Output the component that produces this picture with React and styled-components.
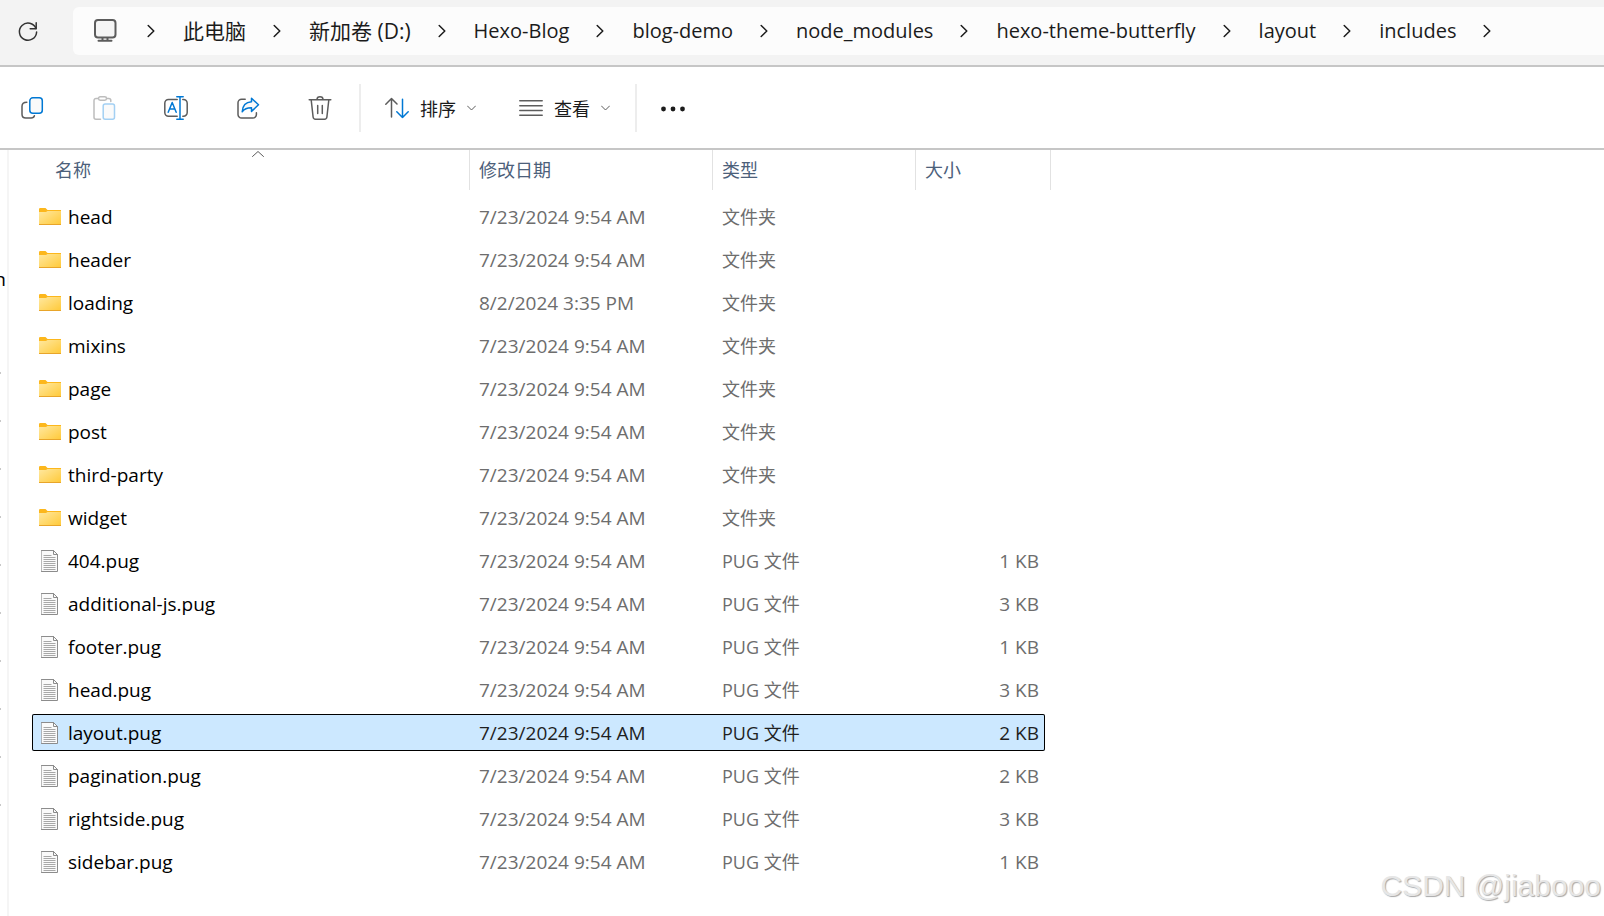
import styled, { createGlobalStyle } from "styled-components";

const GlobalStyle = createGlobalStyle`
  body {
    margin: 0;
    background-color: white;
    font-family: "Open Sans", "Noto Sans CJK SC", sans-serif;
  }
  * {
    box-sizing: border-box;
  }
`;

const Container = styled.div`
  position: relative;
  min-height: 100vh;
  display: flex;
  flex-direction: column;
  overflow: hidden;
`;
const Svg = styled.svg`
  display: block;
  flex: none;
  fill: none;
  stroke: ${(props) => props.$color || "#5c5c5c"};
  stroke-width: ${(props) => props.$weight || 1.5};
  stroke-linecap: round;
  stroke-linejoin: round;
`;

/* address bar */
const AddressBar = styled.header`
  display: flex;
  align-items: center;
  height: 67px;
  padding: 0 0 3px 16px;
  background-color: #f3f3f3;
  border-bottom: 2px solid #c6c6c6;
`;
const IconButton = styled.button`
  display: flex;
  align-items: center;
  justify-content: center;
  width: ${(props) => (props.$wide ? 48 : 24)}px;
  height: 48px;
  padding: 0;
  border: none;
  background: none;
  cursor: pointer;
`;
const Path = styled.nav`
  flex: 1;
  display: flex;
  align-items: center;
  height: 48px;
  margin-left: 33px;
  padding-left: 20px;
  border-radius: 6px 0 0 6px;
  background-color: #fcfcfc;
`;
const Crumbs = styled.ol`
  display: flex;
  margin: 0;
  padding: 0 0 0 30px;
  list-style: none;
`;
const Crumb = styled.li`
  display: flex;
  align-items: center;
  white-space: nowrap;
`;
const CrumbLink = styled.a`
  padding: 0 27px 0 28px;
  font-size: ${(props) => (props.$han ? 21 : 20)}px;
  line-height: 28px;
  color: #1b1b1b;
  text-decoration: none;
`;

/* toolbar */
const Toolbar = styled.div`
  display: flex;
  align-items: center;
  height: 83px;
  padding: 1px 0 0 8px;
  border-bottom: 2px solid #c6c6c6;
`;
const Tools = styled.div`
  display: flex;
  gap: 24px;
  margin-right: 15px;
`;
const Menus = styled.div`
  display: flex;
  gap: 43px;
  margin: 0 25px 0 24px;
`;
const Divider = styled.div`
  width: 2px;
  height: 48px;
  background-color: #ededed;
`;
const MenuButton = styled.button`
  display: flex;
  align-items: center;
  gap: 11px;
  height: 48px;
  padding: 0;
  border: none;
  background: none;
  font-family: inherit;
  font-size: 18px;
  color: #1b1b1b;
  cursor: pointer;
`;
const MoreButton = styled(IconButton)`
  margin-left: 24px;
`;

/* content */
const Main = styled.main`
  flex: 1;
  display: flex;
`;
const Sidebar = styled.aside`
  width: 9px;
  padding-top: 105px;
  border-right: 2px solid #f5f5f5;
  overflow: hidden;
`;
const SidebarItem = styled.div`
  display: flex;
  align-items: center;
  justify-content: flex-end;
  width: 6px;
  height: 48px;
  overflow: hidden;
  font-size: 19px;
  color: black;
`;
const Marks = styled.div`
  display: flex;
  flex-direction: column;
  gap: 46px;
  padding-top: 69px;
`;
const SidebarMark = styled.div`
  width: 1px;
  height: 2px;
  background-color: #c8c8c8;
`;
const Table = styled.table`
  display: block;
  margin-left: 23px;
`;
const Head = styled.thead`
  display: block;
  margin-bottom: 8px;
`;
const HeadRow = styled.tr`
  display: grid;
  grid-template-columns: 438px 243px 203px 135px;
`;
const HeadCell = styled.th`
  position: relative;
  height: 40px;
  padding: 0 0 0 ${(props) => (props.$first ? 23 : 9)}px;
  border-right: 1px solid #e2e2e2;
  font-size: 18px;
  font-weight: 400;
  line-height: 40px;
  text-align: left;
  color: #4c607a;
`;
const SortMark = styled(Svg)`
  position: absolute;
  top: 0;
  right: 205px;
`;
const Body = styled.tbody`
  display: flex;
  flex-direction: column;
  gap: 6px;
`;
const Row = styled.tr`
  display: grid;
  grid-template-columns: 437px 243px 203px 130px;
  align-items: center;
  width: 1013px;
  height: 37px;
  border-radius: 2px;
  color: ${(props) => (props.$selected ? "#1f1f1f" : "#6d6d6d")};
  background-color: ${(props) => (props.$selected ? "#cce8ff" : "transparent")};
  box-shadow: ${(props) => (props.$selected ? "inset 0 0 0 1px black" : "none")};
`;
const Cell = styled.td`
  padding: 0 6px 0 10px;
  font-size: ${(props) => (props.$han ? 18 : 19)}px;
  line-height: 26px;
  white-space: nowrap;
  text-align: ${(props) => props.$align || "left"};
`;
const NameCell = styled(Cell)`
  display: flex;
  align-items: center;
  gap: 7px;
  padding: 0 0 0 7px;
  color: black;
`;
const FileIconBox = styled.span`
  width: 22px;
  padding-left: ${(props) => (props.$file ? 2 : 0)}px;
`;
const Watermark = styled.div`
  position: absolute;
  right: 3px;
  bottom: 12px;
  font-family: "Liberation Sans", sans-serif;
  font-size: 30px;
  line-height: 36px;
  color: #e6e6e6;
  text-shadow: 1px 1px 1px #a8a8a8;
  pointer-events: none;
`;

const BLUE = "#0078d4";

const RefreshIcon = () => (
  <Svg width="24" height="24" $color="#333">
    <path d="M20 9.5A8.6 8.6 0 1 0 20.6 13" />
    <path d="M20.2 3.8v5.9h-6" />
  </Svg>
);
const MonitorIcon = () => (
  <Svg width="24" height="24" $weight={2}>
    <rect x="2" y="1" width="20.5" height="17.5" rx="3" fill="#f5f5f5" />
    <path d="M9.5 19v2.5M14.5 19v2.5M5.5 21.8h13" />
  </Svg>
);
const ChevronRight = () => (
  <Svg width="8" height="14" $color="#1b1b1b">
    <path d="M1.2 1.5L6.8 7l-5.6 5.5" />
  </Svg>
);
const ChevronDown = () => (
  <Svg width="9" height="6" $weight={1}>
    <path d="M.5 1l4 4 4-4" />
  </Svg>
);
const CopyIcon = () => (
  <Svg width="24" height="24">
    <path d="M6.8 6.3C3.8 6.3 2 7.6 2 10.3v7.9c0 2.5 1.4 3.8 3.8 3.8h5.4c1.7 0 2.8-.7 3.2-2.2" />
    <rect x="9.8" y="1.8" width="12.5" height="15.5" rx="3" stroke={BLUE} fill="#fafafa" />
  </Svg>
);
const PasteIcon = () => (
  <Svg width="24" height="24" $color="#bdbdbd">
    <path d="M6 2.5H4a2 2 0 0 0-2 2v16.7a2 2 0 0 0 2 2h4.5M15 2.5h1.8a2 2 0 0 1 2 2v1" />
    <rect x="6.5" y=".8" width="8" height="3.4" rx="1.7" />
    <rect x="11.2" y="8" width="11.3" height="15.2" rx="2" stroke="#a3d0f3" fill="#fafafa" />
  </Svg>
);
const RenameIcon = () => (
  <Svg width="24" height="24">
    <path d="M13.2 3.5H4.5A3.7 3.7 0 0 0 .8 7.2v9.3a3.7 3.7 0 0 0 3.7 3.7h8.7M18.8 3.5h.7a3.7 3.7 0 0 1 3.7 3.7v9.3a3.7 3.7 0 0 1-3.7 3.7h-.7" />
    <path d="M4.2 16.2l4-9.7 4 9.7M5.6 13h5.2M16 .8v22.4M12.8.8h6.4M12.8 23.2h6.4" stroke={BLUE} />
  </Svg>
);
const ShareIcon = () => (
  <Svg width="24" height="24">
    <path d="M9.2 3.2H5.6A3.6 3.6 0 0 0 2 6.8v11.6A3.6 3.6 0 0 0 5.6 22h11.2a3.6 3.6 0 0 0 3.6-3.6v-1.6" />
    <path d="M15.5 2.2l7 6.6-7 6.6v-3.6c-4.4-.1-7 .9-9.3 4 .3-5.6 3.6-9.6 9.3-10z" stroke={BLUE} fill="#fafafa" />
  </Svg>
);
const TrashIcon = () => (
  <Svg width="24" height="24">
    <path d="M1.2 3.8h21.6M9 3.5a3 2.7 0 0 1 6 0M3.2 4l1.9 17a2.5 2.5 0 0 0 2.4 2.2h9a2.5 2.5 0 0 0 2.4-2.2l1.9-17M9.7 9.5v8M14.3 9.5v8" />
  </Svg>
);
const SortIcon = () => (
  <Svg width="24" height="24">
    <path d="M6.5 21V2.5M.8 8.2l5.7-5.7L12 8" />
    <path d="M17.5 3.2v18.3M11.8 15.8l5.7 5.7 5.7-5.7" stroke={BLUE} />
  </Svg>
);
const ViewIcon = () => (
  <Svg width="24" height="24">
    <path d="M.8 4.8h22.4M.8 9.8h22.4M.8 14.5h22.4M.8 19.2h22.4" />
  </Svg>
);
const MoreIcon = () => (
  <Svg width="24" height="24" $color="none">
    <g fill="#1b1b1b">
      <circle cx="2.5" cy="13" r="2.4" />
      <circle cx="12" cy="13" r="2.4" />
      <circle cx="21.5" cy="13" r="2.4" />
    </g>
  </Svg>
);
const FolderIcon = () => (
  <Svg width="22" height="17" $color="none">
    <defs>
      <linearGradient id="folder" x1="0" y1="0" x2="1" y2="1">
        <stop offset="0" stopColor="#ffe8a0" />
        <stop offset="1" stopColor="#ffc937" />
      </linearGradient>
    </defs>
    <path d="M0 1.2Q0 0 1.2 0h5.3L8.5 2H22v3H0z" fill="#fcb71c" />
    <path d="M0 4h7l1.5-1H22v14H0z" fill="url(#folder)" />
    <path d="M0 16h22v1H0z" fill="#e8a52a" />
  </Svg>
);
const FileIcon = () => (
  <Svg width="17" height="22" $color="#8c8c8c" $weight={1}>
    <path d="M.5.5h12l4 4v17H.5z" fill="#fafafa" />
    <path d="M12.5.5v4h4" />
    <path
      d="M2.5 5.5h8M2.5 7.5h12M2.5 9.5h12M2.5 11.5h12M2.5 13.5h12M2.5 15.5h12M2.5 17.5h12M2.5 19.5h12"
      stroke="#a8a8a8"
      strokeLinecap="butt"
    />
  </Svg>
);

const crumbs = [
  { name: "此电脑", han: true },
  { name: "新加卷 (D:)", han: true },
  { name: "Hexo-Blog" },
  { name: "blog-demo" },
  { name: "node_modules" },
  { name: "hexo-theme-butterfly" },
  { name: "layout" },
  { name: "includes" },
];

const tools = [
  { label: "复制", icon: <CopyIcon /> },
  { label: "粘贴", icon: <PasteIcon /> },
  { label: "重命名", icon: <RenameIcon /> },
  { label: "共享", icon: <ShareIcon /> },
  { label: "删除", icon: <TrashIcon /> },
];

const files = [
  { name: "head" },
  { name: "header" },
  { name: "loading", date: "8/2/2024 3:35 PM" },
  { name: "mixins" },
  { name: "page" },
  { name: "post" },
  { name: "third-party" },
  { name: "widget" },
  { name: "404.pug", size: "1 KB" },
  { name: "additional-js.pug", size: "3 KB" },
  { name: "footer.pug", size: "1 KB" },
  { name: "head.pug", size: "3 KB" },
  { name: "layout.pug", size: "2 KB", selected: true },
  { name: "pagination.pug", size: "2 KB" },
  { name: "rightside.pug", size: "3 KB" },
  { name: "sidebar.pug", size: "1 KB" },
];

const App = () => {
  return (
    <Container>
      <GlobalStyle />
      <AddressBar>
        <IconButton aria-label="刷新">
          <RefreshIcon />
        </IconButton>
        <Path>
          <MonitorIcon />
          <Crumbs>
            <Crumb>
              <ChevronRight />
            </Crumb>
            {crumbs.map((crumb) => (
              <Crumb key={crumb.name}>
                <CrumbLink href="#" $han={crumb.han}>
                  {crumb.name}
                </CrumbLink>
                <ChevronRight />
              </Crumb>
            ))}
          </Crumbs>
        </Path>
      </AddressBar>
      <Toolbar>
        <Tools>
          {tools.map((tool) => (
            <IconButton key={tool.label} aria-label={tool.label} $wide>
              {tool.icon}
            </IconButton>
          ))}
        </Tools>
        <Divider />
        <Menus>
          <MenuButton>
            <SortIcon />
            排序
            <ChevronDown />
          </MenuButton>
          <MenuButton>
            <ViewIcon />
            查看
            <ChevronDown />
          </MenuButton>
        </Menus>
        <Divider />
        <MoreButton aria-label="更多">
          <MoreIcon />
        </MoreButton>
      </Toolbar>
      <Main>
        <Sidebar>
          <SidebarItem>n</SidebarItem>
          <Marks>
            {[...Array(10)].map((_, i) => (
              <SidebarMark key={i} />
            ))}
          </Marks>
        </Sidebar>
        <Table>
          <Head>
            <HeadRow>
              <HeadCell $first>
                名称
                <SortMark width="12" height="7" $weight={1}>
                  <path d="M.5 6.5L6 1.5l5.5 5" />
                </SortMark>
              </HeadCell>
              <HeadCell>修改日期</HeadCell>
              <HeadCell>类型</HeadCell>
              <HeadCell>大小</HeadCell>
            </HeadRow>
          </Head>
          <Body>
            {files.map((file) => (
              <Row key={file.name} $selected={file.selected}>
                <NameCell>
                  <FileIconBox $file={file.size}>
                    {file.size ? <FileIcon /> : <FolderIcon />}
                  </FileIconBox>
                  {file.name}
                </NameCell>
                <Cell>{file.date || "7/23/2024 9:54 AM"}</Cell>
                <Cell $han>{file.size ? "PUG 文件" : "文件夹"}</Cell>
                <Cell $align="right">{file.size}</Cell>
              </Row>
            ))}
          </Body>
        </Table>
      </Main>
      <Watermark>CSDN @jiabooo</Watermark>
    </Container>
  );
};

export default App;
